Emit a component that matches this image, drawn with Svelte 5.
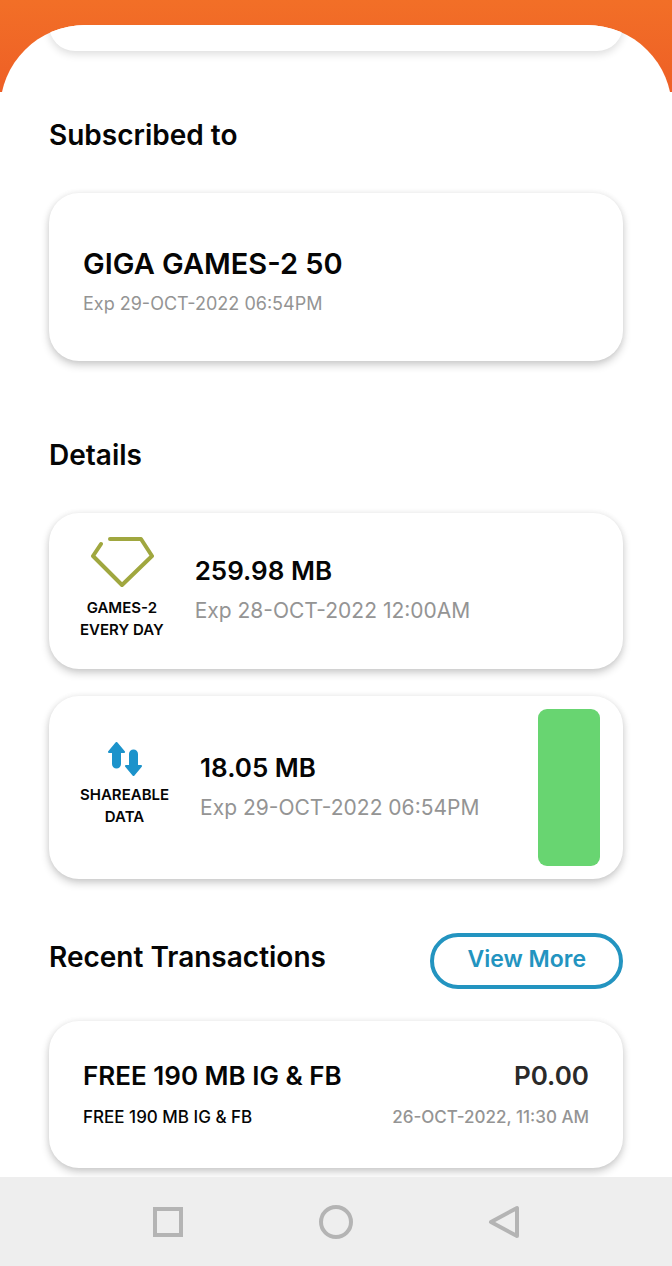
<script>
  const subscription = {
    name: 'GIGA GAMES-2 50',
    expiry: 'Exp 29-OCT-2022 06:54PM',
  };

  const details = [
    {
      icon: 'gem',
      label: ['GAMES-2', 'EVERY DAY'],
      amount: '259.98 MB',
      expiry: 'Exp 28-OCT-2022 12:00AM',
    },
    {
      icon: 'share',
      label: ['SHAREABLE', 'DATA'],
      amount: '18.05 MB',
      expiry: 'Exp 29-OCT-2022 06:54PM',
      bar: true,
    },
  ];

  const transactions = [
    {
      title: 'FREE 190 MB IG & FB',
      note: 'FREE 190 MB IG & FB',
      price: 'P0.00',
      date: '26-OCT-2022, 11:30 AM',
    },
  ];
</script>

<div class="screen">
  <main class="sheet">
    <div class="card peek"></div>

    <section>
      <h2>Subscribed to</h2>
      <div class="card subscription">
        <h3>{subscription.name}</h3>
        <p class="muted">{subscription.expiry}</p>
      </div>
    </section>

    <section>
      <h2>Details</h2>
      <div class="list">
        {#each details as item}
          <div class="card detail">
            <div class="kind">
              {#if item.icon === 'gem'}
                <svg width="64" height="52" viewBox="0 0 64 52" aria-hidden="true">
                  <path
                    d="M11 7 L3 19 L32 48 L62 19 L51 2 H20"
                    fill="none"
                    stroke="#a0a73f"
                    stroke-width="4"
                    stroke-linecap="round"
                    stroke-linejoin="round"
                  />
                </svg>
              {:else}
                <svg width="34" height="34" viewBox="0 0 34 34" aria-hidden="true">
                  <g fill="#1c93cb" stroke="#1c93cb" stroke-width="2" stroke-linejoin="round">
                    <path d="M8.5 1 L16 10 H12 V22 A3 3 0 0 1 5 22 V10 H1 Z" />
                    <path d="M25.5 33 L18 24 H22 V12 A3 3 0 0 1 29 12 V24 H33 Z" />
                  </g>
                </svg>
              {/if}
              <p class="label">
                {#each item.label as line}
                  <span>{line}</span>
                {/each}
              </p>
            </div>
            <div class="usage">
              <p class="amount">{item.amount}</p>
              <p class="expiry muted">{item.expiry}</p>
            </div>
            {#if item.bar}
              <div class="bar"></div>
            {/if}
          </div>
        {/each}
      </div>
    </section>

    <section class="recent">
      <div class="head">
        <h2>Recent Transactions</h2>
        <button class="more" type="button">View More</button>
      </div>
      {#each transactions as item}
        <div class="card transaction">
          <div class="row">
            <h3>{item.title}</h3>
            <p class="price">{item.price}</p>
          </div>
          <div class="row small">
            <p>{item.note}</p>
            <p class="muted">{item.date}</p>
          </div>
        </div>
      {/each}
    </section>
  </main>

  <nav>
    <button type="button" aria-label="Recent apps">
      <svg width="36" height="36" viewBox="0 0 36 36">
        <rect x="5" y="5" width="26" height="26" />
      </svg>
    </button>
    <button type="button" aria-label="Home">
      <svg width="36" height="36" viewBox="0 0 36 36">
        <circle cx="18" cy="18" r="15" />
      </svg>
    </button>
    <button type="button" aria-label="Back">
      <svg width="36" height="36" viewBox="0 0 36 36">
        <path d="M31 4 V32 L5 18 Z" stroke-linejoin="round" />
      </svg>
    </button>
  </nav>
</div>

<style>
  :global(body) {
    margin: 0;
  }
  .screen {
    display: flex;
    flex-direction: column;
    min-height: 100vh;
    box-sizing: border-box;
    padding-top: 25px;
    background: linear-gradient(#f26f27, #ee5f26) top / 100% 92px no-repeat #fff;
    color: #050505;
    font-family: Inter, 'Open Sans', sans-serif;
    font-weight: 500;
  }
  .sheet {
    flex: 1;
    padding: 0 49px 9px;
    border-radius: 85px 85px 0 0;
    background: #fff;
    overflow: hidden;
  }
  h2,
  h3,
  p {
    margin: 0;
  }
  h2 {
    font-size: 28px;
    font-weight: 600;
    line-height: 40px;
  }
  section {
    padding-top: 74px;
  }
  section h2 {
    margin-bottom: 38px;
  }
  .card {
    border-radius: 30px;
    background: #fff;
    box-shadow:
      0 4px 8px rgba(0, 0, 0, 0.2),
      0 0 6px rgba(0, 0, 0, 0.06);
  }
  .peek {
    height: 26px;
    border-radius: 0 0 30px 30px;
    box-shadow: 0 3px 8px rgba(0, 0, 0, 0.14);
  }
  .peek + section {
    padding-top: 64px;
  }
  .muted {
    color: #949494;
    font-weight: 400;
  }
  .subscription {
    display: flex;
    flex-direction: column;
    gap: 8px;
    padding: 51px 34px 45px;
    font-size: 18px;
    line-height: 24px;
  }
  .subscription h3 {
    font-size: 29px;
    font-weight: 600;
    line-height: 40px;
  }
  .list {
    display: flex;
    flex-direction: column;
    gap: 27px;
  }
  .detail {
    display: flex;
    align-items: center;
    gap: 31px;
    padding: 13px 23px 13px 31px;
    min-height: 130px;
  }
  .kind {
    display: flex;
    flex-direction: column;
    align-items: center;
    gap: 8px;
    padding-bottom: 5px;
  }
  .label {
    font-size: 15px;
    font-weight: 600;
    line-height: 22px;
    text-align: center;
  }
  .label span {
    display: block;
  }
  .amount {
    font-size: 26px;
    font-weight: 600;
    line-height: 40px;
  }
  .expiry {
    font-size: 21px;
    line-height: 40px;
  }
  .bar {
    width: 62px;
    height: 157px;
    margin-left: auto;
    border-radius: 9px;
    background: #68d571;
  }
  .recent {
    padding-top: 54px;
  }
  .head {
    display: flex;
    align-items: baseline;
    justify-content: space-between;
    margin-bottom: 32px;
  }
  .head h2 {
    margin: 0;
  }
  .more {
    height: 56px;
    padding: 0 33px 4px;
    border: 4px solid #2394c0;
    border-radius: 28px;
    background: #fff;
    color: #2394c0;
    font: inherit;
    font-size: 23px;
    font-weight: 600;
  }
  .transaction {
    display: flex;
    flex-direction: column;
    gap: 9px;
    padding: 35px 34px 39px;
  }
  .row {
    display: flex;
    align-items: baseline;
    justify-content: space-between;
    font-size: 26px;
    line-height: 40px;
  }
  .row h3 {
    font-size: 26px;
    font-weight: 600;
  }
  .small {
    font-size: 17px;
    line-height: 24px;
  }
  .small .muted {
    font-weight: 500;
  }
  .price {
    color: #2a2a2a;
    font-weight: 600;
  }
  nav {
    display: grid;
    grid-template-columns: repeat(3, 1fr);
    padding: 0 84px;
    height: 89px;
    background: #eee;
  }
  nav button {
    display: grid;
    place-items: center;
    padding: 0;
    border: 0;
    background: none;
  }
  nav svg {
    fill: none;
    stroke: #b4b4b4;
    stroke-width: 4;
  }
</style>
